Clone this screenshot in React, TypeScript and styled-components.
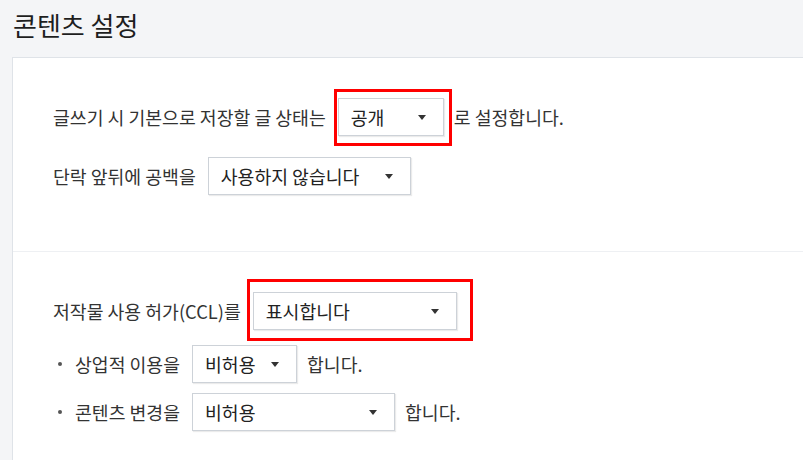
import React from "react";
import styled, { createGlobalStyle } from "styled-components";

const GlobalStyle = createGlobalStyle`
  html, body {
    margin: 0;
    padding: 0;
    background: #f4f5f7;
    overflow: hidden;
  }
  body {
    font-family: "Noto Sans CJK KR", "Noto Sans", sans-serif;
    color: #333;
  }
`;

type SelectProps = {
  value: string;
  width: number;
};

function Select(props: SelectProps) {
  return (
    <SelectBox $width={props.width}>
      <SelectText>{props.value}</SelectText>
      <Caret />
    </SelectBox>
  );
}

type Inset = { top: number; right: number; bottom: number; left: number };

export default function App() {
  // red annotation frames, measured around the select they mark
  const first: Inset = { top: -9, right: -8, bottom: -10, left: -4 };
  const second: Inset = { top: -13, right: -16, bottom: -11, left: -6 };

  return (
    <>
      <GlobalStyle />
      <Page>
        <Title>콘텐츠 설정</Title>
        <Panel>
          <Section>
            <Row>
              글쓰기 시 기본으로 저장할 글 상태는
              <Highlight $inset={first}>
                <Select value="공개" width={106} />
              </Highlight>
              로 설정합니다.
            </Row>
            <Row $gap={21}>
              단락 앞뒤에 공백을
              <Select value="사용하지 않습니다" width={203} />
            </Row>
          </Section>
          <Section>
            <Row>
              저작물 사용 허가(CCL)를
              <Highlight $inset={second}>
                <Select value="표시합니다" width={204} />
              </Highlight>
            </Row>
            <Row $gap={15}>
              <Bullet />
              상업적 이용을
              <Select value="비허용" width={105} />
              합니다.
            </Row>
            <Row $gap={10}>
              <Bullet />
              콘텐츠 변경을
              <Select value="비허용" width={203} />
              합니다.
            </Row>
          </Section>
        </Panel>
      </Page>
    </>
  );
}

const Page = styled.div`
  display: flex;
  flex-direction: column;
  height: 100vh;
  padding-left: 12px;
  box-sizing: border-box;
`;

const Title = styled.h1`
  margin: 0 0 15px 1px;
  padding-top: 8px;
  font-size: 26px;
  line-height: 34px;
  font-weight: 400;
  color: #1e1e1e;
`;

const Panel = styled.div`
  flex: 1;
  background: #fff;
  border: 1px solid #dfe3e8;
  border-right: none;
  border-bottom: none;
  overflow: hidden;
`;

const Section = styled.div`
  padding: 40px 0 56px 40px;
  border-bottom: 1px solid #eef0f3;

  &:last-child {
    border-bottom: none;
  }
`;

const Row = styled.div<{ $gap?: number }>`
  display: flex;
  align-items: center;
  height: 38px;
  margin-top: ${(p) => p.$gap ?? 0}px;
  font-size: 18.3px;
  color: #333;
  white-space: nowrap;
`;

const Bullet = styled.span`
  width: 4px;
  height: 4px;
  border-radius: 50%;
  background: #555;
  margin: 0 13px 0 5px;
`;

const Highlight = styled.span<{ $inset: Inset }>`
  position: relative;
  display: inline-flex;

  &::after {
    content: "";
    position: absolute;
    top: ${(p) => p.$inset.top}px;
    right: ${(p) => p.$inset.right + 10}px;
    bottom: ${(p) => p.$inset.bottom}px;
    left: ${(p) => p.$inset.left + 12}px;
    border: 3px solid #ff0000;
    pointer-events: none;
  }
`;

const SelectBox = styled.div<{ $width: number }>`
  display: flex;
  align-items: center;
  justify-content: space-between;
  box-sizing: border-box;
  width: ${(p) => p.$width}px;
  height: 38px;
  margin: 0 10px 0 12px;
  padding: 0 17px 0 12px;
  border: 1px solid #cdd2d8;
  box-shadow: 1px 1px 1px rgba(0, 0, 0, 0.08);
  background: #fff;
  font-size: 18.3px;
  color: #222;
`;

const SelectText = styled.span`
  line-height: 1;
`;

const Caret = styled.span`
  width: 0;
  height: 0;
  border-left: 4px solid transparent;
  border-right: 4px solid transparent;
  border-top: 5px solid #333;
`;
